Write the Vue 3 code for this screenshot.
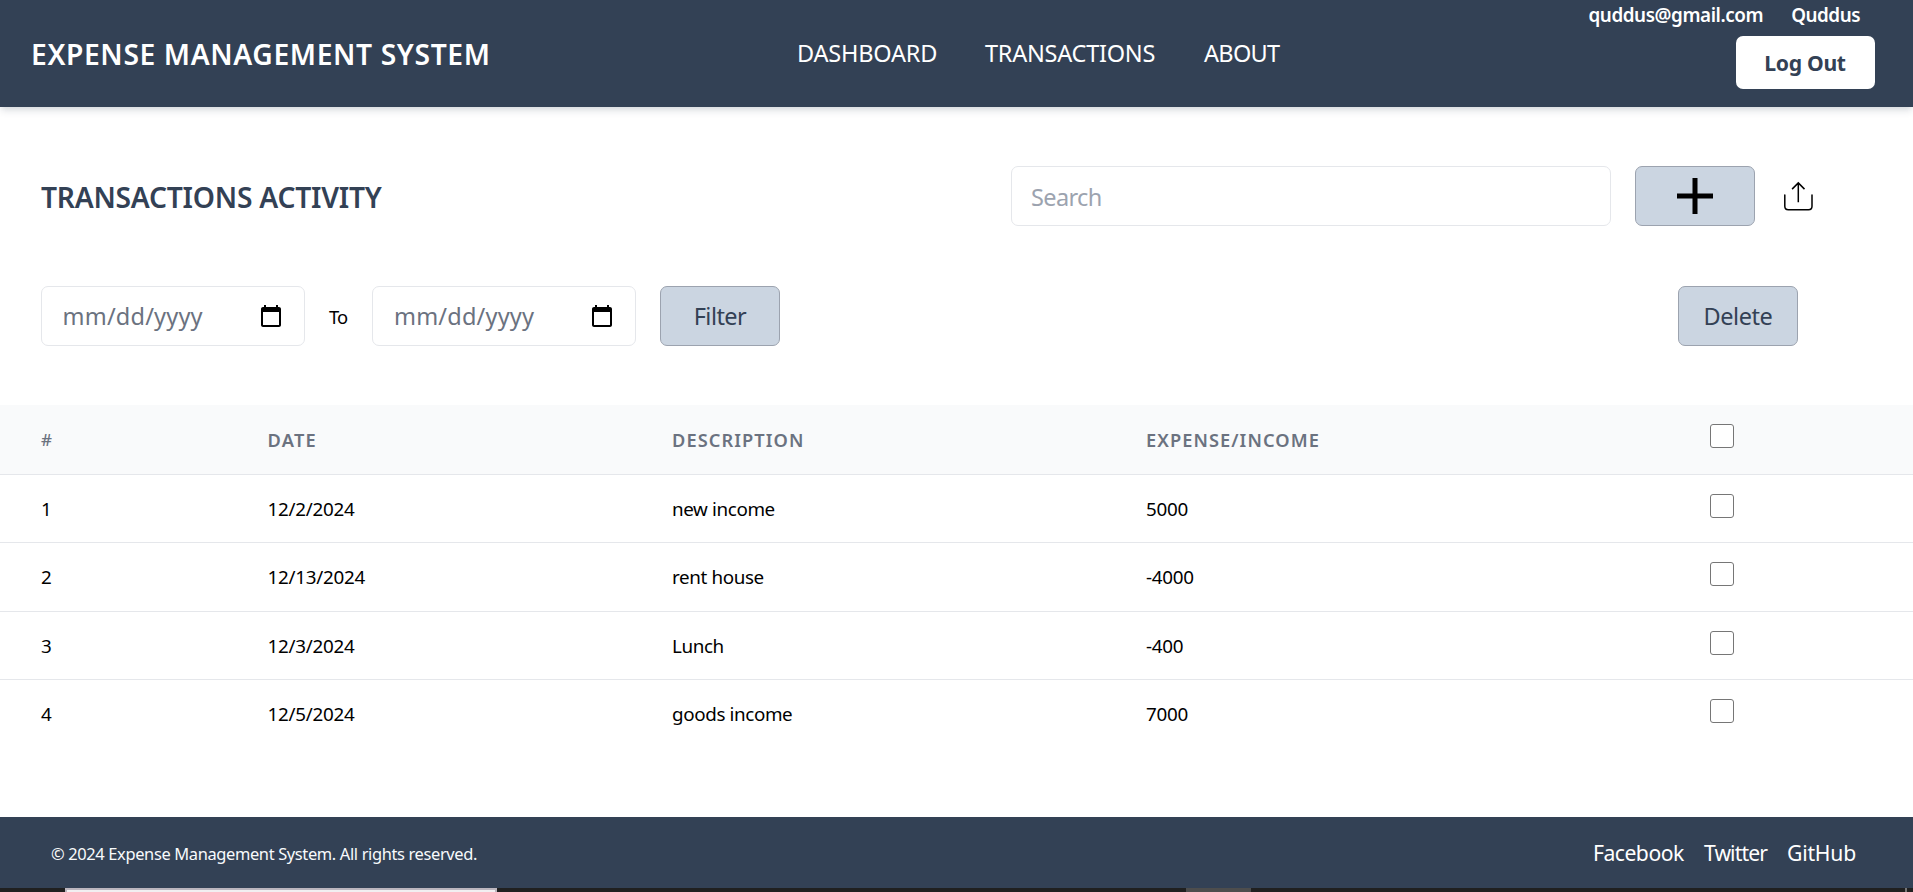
<script setup>
const transactions = [
  { id: 1, date: '12/2/2024', description: 'new income', amount: '5000' },
  { id: 2, date: '12/13/2024', description: 'rent house', amount: '-4000' },
  { id: 3, date: '12/3/2024', description: 'Lunch', amount: '-400' },
  { id: 4, date: '12/5/2024', description: 'goods income', amount: '7000' },
]
</script>

<template>
  <div class="app">
    <header class="header">
      <div class="brand">EXPENSE MANAGEMENT SYSTEM</div>
      <nav class="nav">
        <a class="dashboard">DASHBOARD</a>
        <a class="activity">TRANSACTIONS</a>
        <a class="about">ABOUT</a>
      </nav>
      <div class="account">
        <div class="user"><span class="email">quddus@gmail.com</span><span class="name">Quddus</span></div>
        <button class="logout">Log Out</button>
      </div>
    </header>

    <main class="main">
      <section class="row">
        <h1 class="heading">TRANSACTIONS ACTIVITY</h1>
        <input class="search" type="text" placeholder="Search" />
        <button class="btn add" aria-label="Add">
          <svg width="36" height="36" viewBox="0 0 36 36"><path d="M18 0v36M0 18h36" stroke="#000" stroke-width="5" /></svg>
        </button>
        <svg class="upload" width="30" height="30" viewBox="0 0 30 30" fill="none" stroke="#000" stroke-width="1.5">
          <path d="M1.8 14v11.2q0 3.5 3.5 3.5h20.2q3.5 0 3.5-3.5V14" stroke-linecap="round" />
          <path d="M15.3 21.2V1.8M9.1 8.1l6.2-6.2 6.2 6.2" />
        </svg>
      </section>

      <section class="row filters">
        <template v-for="n in 2" :key="n">
          <div class="date">
            <span>mm/dd/yyyy</span>
            <svg width="24" height="24" viewBox="0 0 24 24"><path d="M20 3h-1V1h-2v2H7V1H5v2H4c-1.1 0-2 .9-2 2v16c0 1.1.9 2 2 2h16c1.1 0 2-.9 2-2V5c0-1.1-.9-2-2-2zm0 18H4V8h16v13z" /></svg>
          </div>
          <span v-if="n === 1" class="to">To</span>
        </template>
        <button class="btn filter">Filter</button>
        <button class="btn delete">Delete</button>
      </section>

      <table class="table">
        <colgroup>
          <col class="c-id" /><col class="c-date" /><col class="c-desc" /><col class="c-amount" /><col />
        </colgroup>
        <thead>
          <tr>
            <th class="hash">#</th>
            <th class="h-date">DATE</th>
            <th>DESCRIPTION</th>
            <th>EXPENSE/INCOME</th>
            <th><input type="checkbox" class="check" /></th>
          </tr>
        </thead>
        <tbody>
          <tr v-for="t in transactions" :key="t.id">
            <td>{{ t.id }}</td>
            <td class="num">{{ t.date }}</td>
            <td>{{ t.description }}</td>
            <td class="num">{{ t.amount }}</td>
            <td><input type="checkbox" class="check" /></td>
          </tr>
        </tbody>
      </table>
    </main>

    <footer class="footer">
      <span class="copy">© 2024 Expense Management System. All rights reserved.</span>
      <div class="links">
        <a class="facebook">Facebook</a>
        <a class="twitter">Twitter</a>
        <a class="github">GitHub</a>
      </div>
    </footer>
    <div class="strip"><i class="window"></i><i class="tab"></i><i class="edge"></i></div>
  </div>
</template>

<style>
body {
  margin: 0;
  background: #fff;
  overflow: hidden;
}
</style>

<style scoped>
.app {
  display: flex;
  flex-direction: column;
  width: 1913px;
  height: 892px;
  font-family: "Noto Sans", "Open Sans", sans-serif;
  color: #000;
  white-space: nowrap;
}
.app * {
  box-sizing: border-box;
}
button,
input {
  font-family: inherit;
  margin: 0;
  padding: 0;
}

.header {
  display: grid;
  grid-template-columns: 797px 1fr 400px;
  align-items: center;
  height: 107px;
  flex: none;
  background: #334155;
  color: #fff;
  box-shadow: 0 5px 7px -1px rgba(51, 65, 85, 0.14), 0 2px 5px -2px rgba(51, 65, 85, 0.1);
}
.brand {
  padding-left: 31px;
  font-size: 28.22px;
  font-weight: 600;
  letter-spacing: 0.63px;
  line-height: 40px;
}
.nav {
  display: flex;
  padding-bottom: 2px;
  font-size: 23.52px;
  line-height: 34px;
}
.dashboard {
  width: 188px;
  letter-spacing: -0.2px;
}
.activity {
  width: 219px;
  letter-spacing: -0.25px;
}
.about {
  letter-spacing: -0.7px;
}
.account {
  align-self: start;
  display: flex;
  flex-direction: column;
  align-items: flex-end;
  padding-right: 38px;
}
.user {
  display: flex;
  gap: 28px;
  height: 36px;
  padding-right: 15px;
  font-size: 18.82px;
  font-weight: 600;
  line-height: 31px;
}
.email {
  letter-spacing: -0.41px;
}
.name {
  letter-spacing: -0.47px;
}
.logout {
  width: 139px;
  height: 53px;
  padding-right: 1px;
  border: 0;
  border-radius: 7px;
  background: #fff;
  color: #334155;
  font-size: 21.17px;
  font-weight: 700;
  letter-spacing: -0.3px;
}

.main {
  flex: 1;
  padding-top: 59px;
}
.row {
  display: flex;
  align-items: center;
  height: 60px;
  padding-left: 41px;
}
.heading {
  width: 970px;
  margin: 0;
  font-size: 28.22px;
  font-weight: 600;
  letter-spacing: -0.24px;
  line-height: 58px;
  padding-top: 2px;
  color: #334155;
}
.search {
  width: 600px;
  height: 60px;
  padding: 2px 19px 0;
  border: 1px solid #e5e7eb;
  border-radius: 7px;
  font-size: 23.52px;
  letter-spacing: -0.64px;
  outline: none;
}
.search::placeholder {
  color: #9ca3af;
  opacity: 1;
}
.btn {
  display: flex;
  align-items: center;
  justify-content: center;
  width: 120px;
  height: 60px;
  border: 1px solid #9ca3af;
  border-radius: 7px;
  background: #cbd5e1;
  color: #334155;
  font-size: 23.52px;
}
.add {
  margin-left: 24px;
}
.upload {
  margin-left: 28px;
}

.filters {
  margin-top: 60px;
}
.date {
  display: flex;
  align-items: center;
  justify-content: space-between;
  width: 264px;
  height: 60px;
  padding: 0 21.5px 0 20.6px;
  border: 1px solid #e5e7eb;
  border-radius: 7px;
  font-size: 23.52px;
  letter-spacing: 0.18px;
  color: #6b7280;
}
.date svg {
  fill: #000;
}
.to {
  width: 67.4px;
  padding-left: 24px;
  font-size: 18.4px;
  letter-spacing: -1px;
}
.filter {
  margin-left: 23.6px;
  letter-spacing: -0.54px;
}
.delete {
  margin-left: 898px;
  letter-spacing: -0.45px;
}

.table {
  width: 100%;
  margin-top: 59px;
  border-spacing: 0;
  table-layout: fixed;
}
.c-id {
  width: 267.5px;
}
.c-date {
  width: 404.5px;
}
.c-desc {
  width: 474px;
}
.c-amount {
  width: 564px;
}
.table th,
.table td {
  padding: 0;
  text-align: left;
  vertical-align: top;
  border-bottom: 1px solid #e5e7eb;
}
.table th:first-child,
.table td:first-child {
  padding-left: 41px;
}
.table th {
  height: 70px;
  background: #f9fafb;
  color: #6b7280;
  font-size: 18.23px;
  font-weight: 600;
  letter-spacing: 1.07px;
  line-height: 69px;
}
.table th {
  padding-top: 1px;
  line-height: 68px;
}
.table th,
.table td {
  overflow: hidden;
}
.table .hash {
  font-size: 17px;
  font-weight: 500;
}
.table .h-date {
  letter-spacing: 1.25px;
}
.table td {
  padding-top: 1px;
  font-size: 18.82px;
  letter-spacing: -0.38px;
  line-height: 66px;
}
.table tbody .num {
  letter-spacing: -0.26px;
}
.table tbody td {
  height: 68px;
  line-height: 67px;
  padding-top: 0;
}
.table tbody td:not(:last-child) {
  line-height: 65px;
  padding-top: 2px;
}
.table tbody tr:nth-child(2) td {
  height: 69px;
}
.table tbody tr:last-child td {
  border-bottom: 0;
}
.check {
  appearance: none;
  display: block;
  width: 24px;
  height: 24px;
  margin-top: 19px;
  border: 1px solid #767676;
  border-radius: 3px;
  background: #fff;
}
.table thead .check {
  margin-top: 18px;
}

.footer {
  display: flex;
  align-items: center;
  justify-content: space-between;
  flex: none;
  height: 71px;
  padding: 0 57px 0 51px;
  background: #334155;
  color: #fff;
}
.copy {
  padding-top: 2px;
  font-size: 16.46px;
  letter-spacing: -0.36px;
  color: #f8fafc;
}
.links {
  display: flex;
  font-size: 21.17px;
}
.facebook {
  width: 111px;
  letter-spacing: -0.5px;
}
.twitter {
  width: 83px;
  letter-spacing: -0.9px;
}
.github {
  letter-spacing: -0.2px;
}

.strip {
  display: flex;
  flex: none;
  height: 4px;
  background: #202020;
}
.window {
  width: 432px;
  margin-left: 65px;
  background: #f1eff1;
  border: 2px solid #bcb6be;
  border-bottom: 0;
}
.tab {
  width: 65px;
  margin-left: 689px;
  background: #4d4d4d;
}
.edge {
  width: 2px;
  margin-left: 654px;
  background: #777;
}
</style>
